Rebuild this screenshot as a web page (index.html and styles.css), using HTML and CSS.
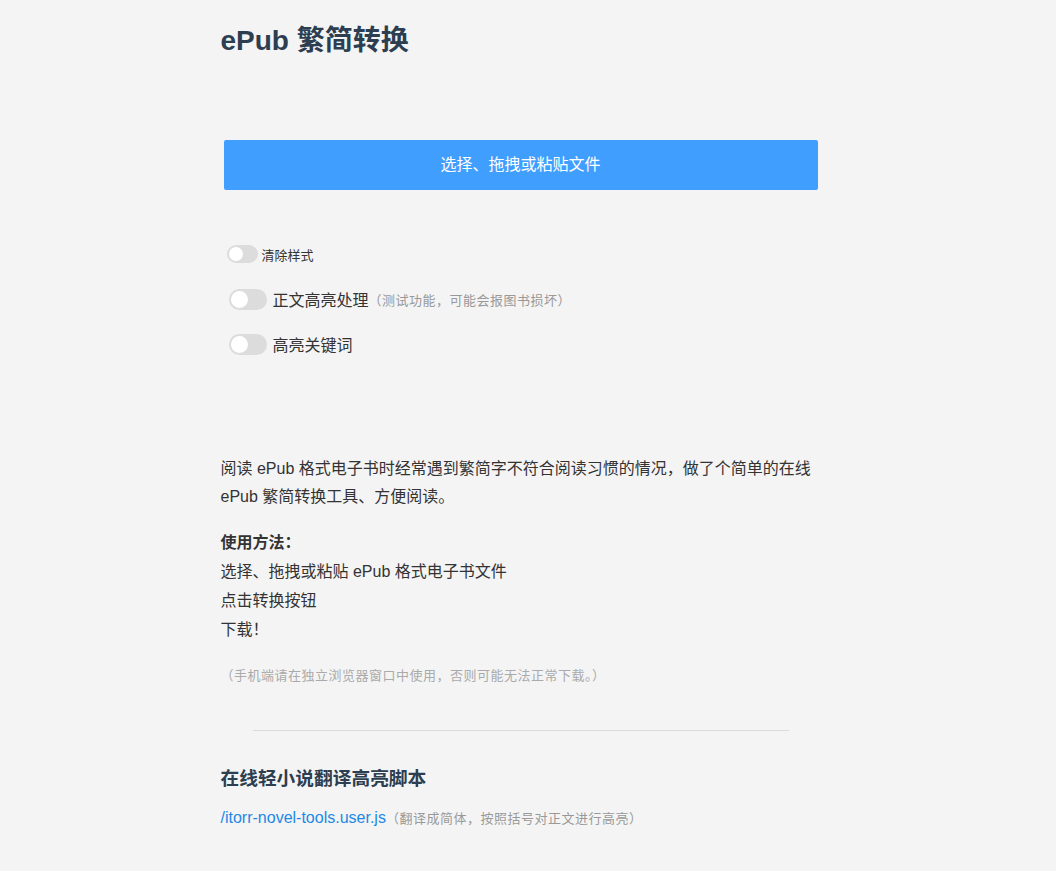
FILE: index.html
```html
<!DOCTYPE html>
<html lang="zh-CN">
<head>
<meta charset="utf-8">
<title>ePub 繁简转换</title>
<link rel="stylesheet" href="styles.css">
</head>
<body>
<main class="app">
  <h1 class="title">ePub 繁简转换</h1>

  <div class="upload">选择、拖拽或粘贴文件</div>

  <div class="options">
    <label class="option option-small">
      <span class="switch switch-small"><span class="knob"></span></span>
      <span class="option-label">清除样式</span>
    </label>
    <label class="option">
      <span class="switch"><span class="knob"></span></span>
      <span class="option-label">正文高亮处理</span><span class="hint">（测试功能，可能会报图书损坏）</span>
    </label>
    <label class="option">
      <span class="switch"><span class="knob"></span></span>
      <span class="option-label">高亮关键词</span>
    </label>
  </div>

  <div class="content">
    <p class="intro">阅读 ePub 格式电子书时经常遇到繁简字不符合阅读习惯的情况，做了个简单的在线 ePub 繁简转换工具、方便阅读。</p>
    <div class="usage">
      <b>使用方法：</b><br>
      选择、拖拽或粘贴 ePub 格式电子书文件<br>
      点击转换按钮<br>
      下载！
    </div>
    <p class="note">（手机端请在独立浏览器窗口中使用，否则可能无法正常下载。）</p>
  </div>

  <hr class="divider">

  <h3 class="subtitle">在线轻小说翻译高亮脚本</h3>
  <p class="link-line"><a class="link" href="#">/itorr-novel-tools.user.js</a><span class="hint">（翻译成简体，按照括号对正文进行高亮）</span></p>
</main>
</body>
</html>
```
FILE: styles.css
```css
html, body {
  margin: 0;
  padding: 0;
  background: #f4f4f4;
}

body {
  font-family: "Liberation Sans", "Noto Sans CJK SC", sans-serif;
  color: #333;
  font-size: 16px;
  padding-right: 15px;
}

.app {
  width: 600px;
  margin: 0 auto;
  padding-bottom: 40px;
}

.title {
  margin: 24px 0 0;
  font-size: 28px;
  line-height: 34px;
  font-weight: bold;
  color: #2c3e50;
}

.upload {
  margin: 82px 3px 0;
  height: 50px;
  line-height: 50px;
  background: #409eff;
  color: #fff;
  text-align: center;
  border-radius: 2px;
  font-size: 16px;
}

.options {
  margin-top: 52px;
  display: flex;
  flex-direction: column;
  gap: 21px;
}

.option {
  display: flex;
  align-items: center;
  height: 24px;
  padding-left: 8px;
}

.option-small {
  padding-left: 6px;
}

.switch {
  position: relative;
  width: 38px;
  height: 21px;
  border-radius: 11px;
  background: #dcdcdc;
  flex: none;
  margin-right: 6px;
}

.switch-small {
  width: 31px;
  height: 18px;
  margin-right: 4px;
}

.knob {
  position: absolute;
  top: 2px;
  left: 2px;
  width: 17px;
  height: 17px;
  border-radius: 50%;
  background: #fff;
}

.switch-small .knob {
  top: 2px;
  left: 2px;
  width: 14px;
  height: 14px;
}

.option-label {
  font-size: 16px;
  color: #333;
}

.option-small .option-label {
  font-size: 13px;
}

.hint {
  font-size: 13px;
  color: #999;
  letter-spacing: 0.5px;
}

.content {
  margin-top: 99px;
}

.intro {
  margin: 0;
  line-height: 28px;
}

.usage {
  margin-top: 17px;
  line-height: 29px;
}

.usage b {
  color: #333;
}

.note {
  margin: 22px 0 0;
  font-size: 13px;
  line-height: 20px;
  color: #aaa;
  letter-spacing: 0.5px;
}

.divider {
  margin: 44px 32px 0;
  border: 0;
  border-top: 1px solid #dcdcdc;
  height: 0;
}

.subtitle {
  margin: 36px 0 0;
  font-size: 18.72px;
  line-height: 24px;
  color: #2c3e50;
}

.link-line {
  margin: 15px 0 0;
  line-height: 24px;
}

.link {
  color: #1e88e5;
  text-decoration: none;
}
```
